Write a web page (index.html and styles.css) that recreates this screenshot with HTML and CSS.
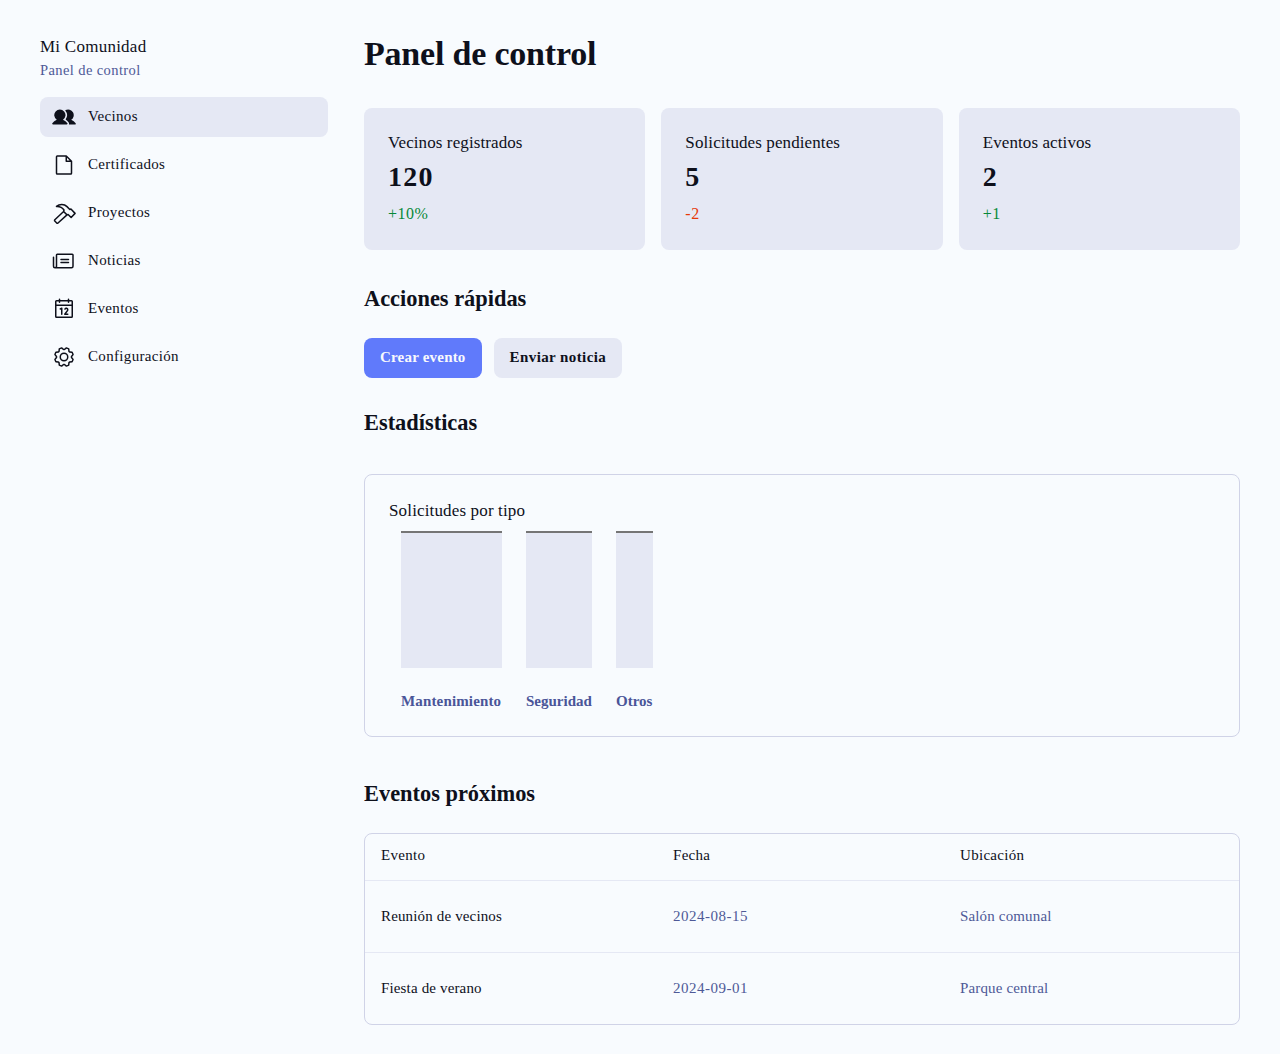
FILE: index.html
```html
<!DOCTYPE html>
<html lang="es">
<head>
    <meta charset="UTF-8">
    <meta name="viewport" content="width=device-width, initial-scale=1.0">
    <title>Panel de control</title>
    <link rel="stylesheet" href="styles.css">
</head>
<body>
    <div class="layout">
        <aside class="sidebar">
            <div class="brand">
                <h1>Mi Comunidad</h1>
                <p>Panel de control</p>
            </div>
            <nav class="nav">
                <a class="nav-item active">
                    <svg class="icon" viewBox="0 0 256 256"><path d="M164.47,195.63a8,8,0,0,1-6.7,12.37H10.23a8,8,0,0,1-6.7-12.37,95.83,95.83,0,0,1,47.22-37.71,60,60,0,1,1,66.5,0A95.83,95.83,0,0,1,164.47,195.63Zm87.91-.15a95.87,95.87,0,0,0-47.13-37.56A60,60,0,0,0,144.7,54.59a4,4,0,0,0-1.33,6A75.83,75.83,0,0,1,147,150.53a4,4,0,0,0,1.07,5.53,112.32,112.32,0,0,1,29.85,30.83,23.92,23.92,0,0,1,3.65,16.47,4,4,0,0,0,3.95,4.64h60.3a8,8,0,0,0,7.73-5.93A8.22,8.22,0,0,0,252.38,195.48Z"></path></svg>
                    <span>Vecinos</span>
                </a>
                <a class="nav-item">
                    <svg class="icon" viewBox="0 0 256 256"><path d="M213.66,82.34l-56-56A8,8,0,0,0,152,24H56A16,16,0,0,0,40,40V216a16,16,0,0,0,16,16H200a16,16,0,0,0,16-16V88A8,8,0,0,0,213.66,82.34ZM160,51.31,188.69,80H160ZM200,216H56V40h88V88a8,8,0,0,0,8,8h48V216Z"></path></svg>
                    <span>Certificados</span>
                </a>
                <a class="nav-item">
                    <svg class="icon" viewBox="0 0 256 256"><path class="icon-line" d="M48,58C80,30 130,30 160,60L190,90L202,86L246,132L204,176L172,144L160,148L124,112L128,96C112,72 80,56 48,58Z M124,112L30,200C26,204 26,210 30,214L50,234C54,238 60,238 64,234L160,148"></path></svg>
                    <span>Proyectos</span>
                </a>
                <a class="nav-item">
                    <svg class="icon" viewBox="0 0 256 256"><path d="M88,112a8,8,0,0,1,8-8h80a8,8,0,0,1,0,16H96A8,8,0,0,1,88,112Zm8,40h80a8,8,0,0,0,0-16H96a8,8,0,0,0,0,16ZM232,64V184a24,24,0,0,1-24,24H32A24,24,0,0,1,8,184.11V88a8,8,0,0,1,16,0v96a8,8,0,0,0,16,0V64A16,16,0,0,1,56,48H216A16,16,0,0,1,232,64Zm-16,0H56V184a23.84,23.84,0,0,1-1.37,8H208a8,8,0,0,0,8-8Z"></path></svg>
                    <span>Noticias</span>
                </a>
                <a class="nav-item">
                    <svg class="icon" viewBox="0 0 256 256"><path d="M208,32H184V24a8,8,0,0,0-16,0v8H88V24a8,8,0,0,0-16,0v8H48A16,16,0,0,0,32,48V208a16,16,0,0,0,16,16H208a16,16,0,0,0,16-16V48A16,16,0,0,0,208,32ZM72,48v8a8,8,0,0,0,16,0V48h80v8a8,8,0,0,0,16,0V48h24V80H48V48ZM208,208H48V96H208V208Zm-96-88v64a8,8,0,0,1-16,0V132.94l-4.42,2.22a8,8,0,0,1-7.16-14.32l16-8A8,8,0,0,1,112,120Zm59.16,30.45L152,176h16a8,8,0,0,1,0,16H136a8,8,0,0,1-6.4-12.8l28.78-38.37A8,8,0,1,0,145.07,132a8,8,0,1,1-13.85-8A24,24,0,0,1,176,136,23.76,23.76,0,0,1,171.16,150.45Z"></path></svg>
                    <span>Eventos</span>
                </a>
                <a class="nav-item">
                    <svg class="icon" viewBox="0 0 256 256"><path d="M128,80a48,48,0,1,0,48,48A48.05,48.05,0,0,0,128,80Zm0,80a32,32,0,1,1,32-32A32,32,0,0,1,128,160Zm88-29.84q.06-2.16,0-4.32l14.92-18.64a8,8,0,0,0,1.48-7.06,107.21,107.21,0,0,0-10.88-26.25,8,8,0,0,0-6-3.93l-23.72-2.64q-1.48-1.56-3-3L186,40.54a8,8,0,0,0-3.94-6,107.71,107.71,0,0,0-26.25-10.87,8,8,0,0,0-7.06,1.49L130.16,40Q128,40,125.84,40L107.2,25.11a8,8,0,0,0-7.06-1.48A107.6,107.6,0,0,0,73.89,34.51a8,8,0,0,0-3.93,6L67.32,64.27q-1.56,1.49-3,3L40.54,70a8,8,0,0,0-6,3.94,107.71,107.71,0,0,0-10.87,26.25,8,8,0,0,0,1.49,7.06L40,125.84Q40,128,40,130.16L25.11,148.8a8,8,0,0,0-1.48,7.06,107.21,107.21,0,0,0,10.88,26.25,8,8,0,0,0,6,3.93l23.72,2.64q1.49,1.56,3,3L70,215.46a8,8,0,0,0,3.94,6,107.71,107.71,0,0,0,26.25,10.87,8,8,0,0,0,7.06-1.49L125.84,216q2.16.06,4.32,0l18.64,14.92a8,8,0,0,0,7.06,1.48,107.21,107.21,0,0,0,26.25-10.88,8,8,0,0,0,3.93-6l2.64-23.72q1.56-1.48,3-3L215.46,186a8,8,0,0,0,6-3.94,107.71,107.71,0,0,0,10.87-26.25,8,8,0,0,0-1.49-7.06Zm-16.1-6.5a73.93,73.93,0,0,1,0,8.68,8,8,0,0,0,1.74,5.48l14.19,17.73a91.57,91.57,0,0,1-6.23,15L187,173.11a8,8,0,0,0-5.1,2.64,74.11,74.11,0,0,1-6.14,6.14,8,8,0,0,0-2.64,5.1l-2.51,22.58a91.32,91.32,0,0,1-15,6.23l-17.74-14.19a8,8,0,0,0-5-1.75h-.48a73.93,73.93,0,0,1-8.68,0,8,8,0,0,0-5.48,1.74L100.45,215.8a91.57,91.57,0,0,1-15-6.23L82.89,187a8,8,0,0,0-2.64-5.1,74.11,74.11,0,0,1-6.14-6.14,8,8,0,0,0-5.1-2.64L46.43,170.6a91.32,91.32,0,0,1-6.23-15l14.19-17.74a8,8,0,0,0,1.74-5.48,73.93,73.93,0,0,1,0-8.68,8,8,0,0,0-1.74-5.48L40.2,100.45a91.57,91.57,0,0,1,6.23-15L69,82.89a8,8,0,0,0,5.1-2.64,74.11,74.11,0,0,1,6.14-6.14A8,8,0,0,0,82.89,69L85.4,46.43a91.32,91.32,0,0,1,15-6.23l17.74,14.19a8,8,0,0,0,5.48,1.74,73.93,73.93,0,0,1,8.68,0,8,8,0,0,0,5.48-1.74L155.55,40.2a91.57,91.57,0,0,1,15,6.23L173.11,69a8,8,0,0,0,2.64,5.1,74.11,74.11,0,0,1,6.14,6.14,8,8,0,0,0,5.1,2.64l22.58,2.51a91.32,91.32,0,0,1,6.23,15l-14.19,17.74A8,8,0,0,0,199.87,123.66Z"></path></svg>
                    <span>Configuración</span>
                </a>
            </nav>
        </aside>

        <main class="content">
            <h1 class="page-title">Panel de control</h1>

            <div class="stats">
                <div class="stat-card">
                    <p class="stat-label">Vecinos registrados</p>
                    <p class="stat-value">120</p>
                    <p class="stat-change up">+10%</p>
                </div>
                <div class="stat-card">
                    <p class="stat-label">Solicitudes pendientes</p>
                    <p class="stat-value">5</p>
                    <p class="stat-change down">-2</p>
                </div>
                <div class="stat-card">
                    <p class="stat-label">Eventos activos</p>
                    <p class="stat-value">2</p>
                    <p class="stat-change up">+1</p>
                </div>
            </div>

            <h2 class="section-title">Acciones rápidas</h2>
            <div class="actions">
                <button class="btn primary">Crear evento</button>
                <button class="btn">Enviar noticia</button>
            </div>

            <h2 class="section-title stats-title">Estadísticas</h2>
            <div class="chart-card">
                <p class="chart-title">Solicitudes por tipo</p>
                <div class="chart">
                    <div class="bar"></div>
                    <div class="bar"></div>
                    <div class="bar"></div>
                    <span class="bar-label">Mantenimiento</span>
                    <span class="bar-label">Seguridad</span>
                    <span class="bar-label">Otros</span>
                </div>
            </div>

            <h2 class="section-title events-title">Eventos próximos</h2>
            <div class="table-card">
                <table>
                    <thead>
                        <tr>
                            <th class="col-event">Evento</th>
                            <th class="col-date">Fecha</th>
                            <th>Ubicación</th>
                        </tr>
                    </thead>
                    <tbody>
                        <tr>
                            <td>Reunión de vecinos</td>
                            <td class="muted date">2024-08-15</td>
                            <td class="muted">Salón comunal</td>
                        </tr>
                        <tr>
                            <td>Fiesta de verano</td>
                            <td class="muted date">2024-09-01</td>
                            <td class="muted">Parque central</td>
                        </tr>
                    </tbody>
                </table>
            </div>
        </main>
    </div>
</body>
</html>
```

FILE: styles.css
```css
* {
    margin: 0;
    padding: 0;
    box-sizing: border-box;
}

body {
    font-family: "Liberation Serif", serif;
    background-color: #f8fbfe;
    color: #0e101b;
}

.layout {
    display: flex;
    gap: 36px;
    padding: 36px 40px 29px;
}

.sidebar {
    width: 288px;
    flex-shrink: 0;
}

.brand h1 {
    font-size: 17px;
    font-weight: 400;
    line-height: 22px;
    letter-spacing: 0.25px;
}

.brand p {
    font-size: 14.5px;
    line-height: 21px;
    margin-top: 2px;
    letter-spacing: 0.4px;
    color: #4e5997;
}

.nav {
    display: flex;
    flex-direction: column;
    gap: 8px;
    margin-top: 16px;
}

.nav-item {
    display: flex;
    align-items: center;
    gap: 12px;
    height: 40px;
    padding: 0 12px;
    border-radius: 8px;
    font-size: 15px;
    letter-spacing: 0.33px;
}

.nav-item span {
    padding-bottom: 2px;
}

.nav-item.active {
    background: #e5e8f4;
}

.icon {
    width: 24px;
    height: 24px;
    fill: #0e101b;
    flex-shrink: 0;
}

.icon-line {
    fill: none;
    stroke: #0e101b;
    stroke-width: 16;
    stroke-linejoin: round;
    stroke-linecap: round;
}

.content {
    flex: 1;
    min-width: 0;
}

.page-title {
    font-size: 34px;
    font-weight: 700;
    line-height: 36px;
    letter-spacing: -0.2px;
    margin-bottom: 36px;
}

.stats {
    display: grid;
    grid-template-columns: repeat(3, 1fr);
    gap: 16px;
}

.stat-card {
    background: #e5e8f4;
    border-radius: 8px;
    padding: 23px 24px 24px;
}

.stat-label {
    font-size: 17px;
    line-height: 24px;
    letter-spacing: 0.1px;
}

.stat-value {
    font-size: 28px;
    font-weight: 700;
    line-height: 30px;
    letter-spacing: 1.2px;
    margin-top: 7px;
}

.stat-change {
    font-size: 16px;
    line-height: 24px;
    letter-spacing: 0.5px;
    margin-top: 10px;
}

.stat-change.up {
    color: #078838;
}

.stat-change.down {
    color: #e73908;
}

.section-title {
    font-size: 22.4px;
    font-weight: 700;
    line-height: 28px;
    margin-top: 35px;
}

.actions {
    display: flex;
    gap: 12px;
    margin-top: 25px;
}

.btn {
    height: 40px;
    padding: 0 16px 2px;
    border: none;
    border-radius: 8px;
    background: #e5e8f4;
    color: #0e101b;
    font-family: inherit;
    font-size: 15px;
    font-weight: 700;
    letter-spacing: 0.4px;
    cursor: pointer;
}

.btn.primary {
    background: #607afb;
    color: #f8f9fc;
    letter-spacing: 0.2px;
}

.stats-title {
    margin-top: 31px;
}

.chart-card {
    margin-top: 37px;
    height: 263px;
    padding: 24px;
    border: 1px solid #d0d3e7;
    border-radius: 8px;
}

.chart-title {
    font-size: 17px;
    line-height: 24px;
    letter-spacing: 0.15px;
}

.chart {
    display: grid;
    grid-template-columns: 101px 66px 37px;
    column-gap: 24px;
    padding-left: 12px;
    margin-top: 8px;
}

.bar {
    height: 137px;
    background: #e5e8f4;
    border-top: 2px solid #757575;
}

.bar-label {
    font-size: 15px;
    font-weight: 700;
    line-height: 20px;
    margin-top: 23px;
    color: #4a5599;
    white-space: nowrap;
}

.bar-label:first-of-type {
    letter-spacing: 0.15px;
}

.events-title {
    margin-top: 43px;
}

.table-card {
    margin-top: 25px;
    border: 1px solid #d0d3e7;
    border-radius: 8px;
    overflow: hidden;
}

table {
    width: 100%;
    border-collapse: collapse;
    table-layout: fixed;
}

th, td {
    padding: 0 16px;
    text-align: left;
    font-size: 15px;
    font-weight: 400;
    letter-spacing: 0.15px;
}

th {
    height: 46px;
    padding-bottom: 2px;
    letter-spacing: 0.3px;
}

td {
    height: 72px;
    border-top: 1px solid #e5e8f4;
}

.col-event {
    width: 292px;
}

.col-date {
    width: 287px;
}

.muted {
    color: #4e5997;
}

td.date {
    letter-spacing: 0.5px;
}
```
